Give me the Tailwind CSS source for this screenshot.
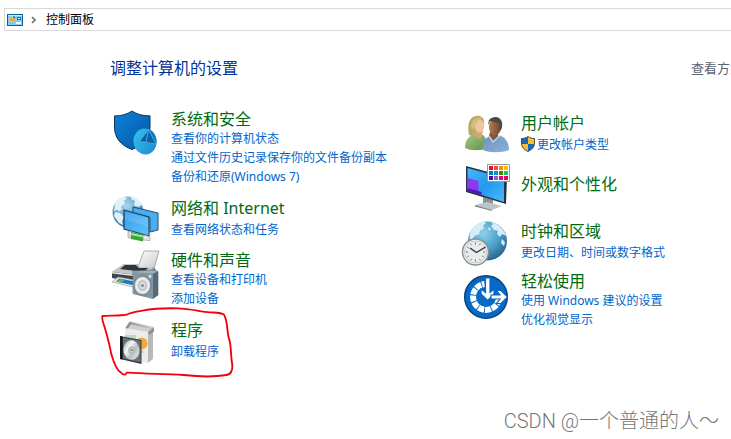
<!DOCTYPE html>
<html lang="zh-CN">
<head>
    <meta charset="UTF-8">
    <meta name="viewport" content="width=device-width, initial-scale=1.0">
    <title>控制面板</title>
    <script src="https://cdn.jsdelivr.net/npm/@tailwindcss/browser@4"></script>
</head>
<body class="relative min-h-screen overflow-hidden bg-white font-['Noto_Sans','Noto_Sans_CJK_SC',sans-serif] text-xs text-black">
    <!-- Address bar -->
    <nav class="mt-2 ml-1 flex h-[23px] items-center border border-r-0 border-[#d9d9d9] pl-0.5" aria-label="地址">
        <svg class="h-3 w-4" viewBox="0 0 16 12">
            <rect x=".5" y=".5" width="15" height="11" fill="#7fd0f7" stroke="#08639c"/>
            <rect x="1" y="1" width="14" height="1" fill="#c2ecff"/>
            <circle cx="5.5" cy="5" r="2.8" fill="#fff"/>
            <path d="M5.5 5V2.2A2.8 2.8 0 1 0 8.3 5z" fill="#f5a623"/>
            <path d="M6 4.500V2a2.800 2.800 0 0 1 2.500 2.500z" fill="#1377bd"/>
            <path d="M10 3h4v3h-4z" fill="#1377bd"/>
            <path d="M11 4h2v1h-2z" fill="#fff"/>
            <path d="M2 9h5v1H2z" fill="#f5a623"/>
            <path d="M9 8h5v2H9z" fill="#fff"/>
        </svg>
        <svg class="mx-2 h-2 w-1.5" viewBox="0 0 6 8" fill="none" stroke="#6e6e6e" stroke-width="1.6"><path d="M1 1l3 3-3 3"/></svg>
        <a href="#" class="pl-px">控制面板</a>
    </nav>

    <main>
        <header class="mt-[25px] flex items-center justify-between pl-[110px]">
            <h1 class="text-base leading-6 text-[#003399]">调整计算机的设置</h1>
            <span class="w-10 shrink-0 overflow-hidden text-[13px] leading-5 whitespace-nowrap text-[#5a6472]">查看方式:</span>
        </header>

        <div class="mt-[29px] grid grid-cols-[350px_1fr] pl-[111px] whitespace-nowrap">
            <!-- Left column -->
            <div class="flex flex-col gap-2">
                <section class="flex items-start gap-3">
                    <svg class="size-12 shrink-0" viewBox="0 0 48 48">
                        <defs>
                            <linearGradient id="shield" x1="0" y1="0" x2="1" y2="1"><stop offset="0" stop-color="#0b82d8"/><stop offset="1" stop-color="#0557a5"/></linearGradient>
                            <linearGradient id="pie" x1="0" y1="0" x2="1" y2="1"><stop offset="0" stop-color="#35c3f0"/><stop offset="1" stop-color="#1789c9"/></linearGradient>
                        </defs>
                        <path d="M21 2c5 3.400 11 4.900 18 4.900V18c0 11-7 18.500-18 22.500C10 36.500 3.500 29 3.500 18V6.900C10.500 6.900 16 5.500 21 2z" fill="url(#shield)" stroke="#13324f"/>
                        <ellipse cx="34" cy="32.500" rx="11.500" ry="13" transform="rotate(-12 34 32.500)" fill="url(#pie)"/>
                        <path d="M34.500 34l3-14c4 1.500 7 5 8 11l-.5 4z" fill="#1477bb"/>
                        <path d="M37.200 21l-2.700 12-6-.4z" fill="#0b5ca8"/>
                        <path d="M37.500 21l7.500 14-10-1.400z" fill="#125fa5"/>
                        <path d="M28.500 32.500L37.500 20.500 45 35l-16.500-2.500M35 33.500l2.500-13" fill="none" stroke="#45b8e8" stroke-width=".8"/>
                    </svg>
                    <div class="self-center">
                        <h2 class="text-base leading-5 text-[#006b12]"><a href="#">系统和安全</a></h2>
                        <ul class="leading-[19px] text-[#0066cc]">
                            <li><a href="#">查看你的计算机状态</a></li>
                            <li><a href="#">通过文件历史记录保存你的文件备份副本</a></li>
                            <li><a href="#">备份和还原(Windows 7)</a></li>
                        </ul>
                    </div>
                </section>

                <section class="flex items-start gap-3">
                    <svg class="size-12 shrink-0" viewBox="0 0 48 48">
                        <defs>
                            <radialGradient id="globe" cx=".45" cy=".3" r=".75"><stop offset="0" stop-color="#a9d8ed"/><stop offset=".6" stop-color="#5c9fc4"/><stop offset="1" stop-color="#356f99"/></radialGradient>
                            <linearGradient id="screen" x1="0" y1="0" x2="1" y2="1"><stop offset="0" stop-color="#2f9cee"/><stop offset="1" stop-color="#63c4fb"/></linearGradient>
                        </defs>
                        <circle cx="17" cy="18" r="15.500" fill="url(#globe)"/>
                        <path d="M4 10c2-4 6-7 10-7.500l2 2-3 2 1 3-4 3 1 3-3 2-2-2-3 2zM20 3c4 0 9 3 11 8l-4 2-4-2 1-4-4-2zM4 18l5 1 4 4-2 4 1 4-4-2-5-7z" fill="#e0f1f8"/>
                        <path d="M22 13l25 6v17l-8 2V24l-17-5z" fill="#48aef4" stroke="#294e6b"/>
                        <path d="M13 16l25 7v19l-25-7z" fill="url(#screen)" stroke="#203e57" stroke-width="1.200"/>
                        <path d="M14 18l23 6.500v8L14 26z" fill="#fff" opacity=".12"/>
                        <path d="M17 37l5 1v7l-5-1.500z" fill="#d9ddd9" stroke="#8b928b" stroke-width=".6"/>
                        <path d="M20 38l12 2.500v7L20 45z" fill="#35aa35"/>
                        <path d="M20 39l12 2.500v2L20 41z" fill="#a5e6a0"/>
                        <path d="M32 41l7 1.500v4L32 46z" fill="#e6e9e6" stroke="#8b928b" stroke-width=".6"/>
                    </svg>
                    <div class="self-center">
                        <h2 class="mb-0.5 text-base leading-5 text-[#006b12]"><a href="#">网络和 Internet</a></h2>
                        <ul class="leading-[19px] text-[#0066cc]">
                            <li><a href="#">查看网络状态和任务</a></li>
                        </ul>
                    </div>
                </section>

                <section class="flex items-start gap-3">
                    <svg class="size-12 shrink-0 overflow-visible" viewBox="0 0 48 48">
                        <defs>
                            <linearGradient id="paper" x1="0" y1="0" x2="1" y2="1"><stop offset="0" stop-color="#fff"/><stop offset="1" stop-color="#c6c9cc"/></linearGradient>
                            <radialGradient id="cone"><stop offset="0" stop-color="#8b9399"/><stop offset=".3" stop-color="#c6cdd2"/><stop offset=".75" stop-color="#eef1f2"/><stop offset="1" stop-color="#a5adb3"/></radialGradient>
                        </defs>
                        <path d="M33 1h15l-5 18H25l3-5z" fill="url(#paper)" stroke="#8a8e91" stroke-width=".7"/>
                        <path d="M13 14h13l3 3h14l2 3v10l-15 2L1 27v-5z" fill="#8b9094"/>
                        <path d="M13 14h13l3 3h14l-8 9L1 22z" fill="#c3c6c9"/>
                        <path d="M14 15h11l3 3h9l-4 4L9 19z" fill="#30363b"/>
                        <path d="M1 22l33 4v8L1 28z" fill="#3d4347"/>
                        <path d="M1 22l33 4v1.500L1 23.500z" fill="#e2e5e7"/>
                        <path d="M7 27l22 4-7 6L1 32z" fill="#e8edef" stroke="#8b9195" stroke-width=".6"/>
                        <path d="M8 28.500l16 3-3 3.500-16-3.500z" fill="#2379bd"/>
                        <path d="M9 29l5 .8-4 3-5-1z" fill="#5abb5d"/>
                        <path d="M22 21l21-1 4 1.500V45l-5 3.500-20-5z" fill="#9fb0bb" stroke="#5c6c77" stroke-width=".7"/>
                        <path d="M22 22l20 1.500v25L22 43.500z" fill="#8496a3"/>
                        <path d="M42 23.500l5-2V45l-5 3.500z" fill="#566976"/>
                        <ellipse cx="31.500" cy="35.500" rx="8.500" ry="9.500" fill="url(#cone)" stroke="#66737c" stroke-width=".8"/>
                        <ellipse cx="31.500" cy="35.500" rx="3.600" ry="4.500" fill="#d8dde0" stroke="#929ba1" stroke-width=".7"/>
                        <circle cx="31.500" cy="35.500" r="1.500" fill="#838c93"/>
                        <circle cx="39" cy="26.500" r="1.400" fill="#e2e7ea"/>
                    </svg>
                    <div class="self-center">
                        <h2 class="text-base leading-5 text-[#006b12]"><a href="#">硬件和声音</a></h2>
                        <ul class="leading-[19px] text-[#0066cc]">
                            <li><a href="#">查看设备和打印机</a></li>
                            <li><a href="#">添加设备</a></li>
                        </ul>
                    </div>
                </section>

                <section class="relative flex items-start gap-3">
                    <svg class="size-12 shrink-0" viewBox="0 0 48 48">
                        <defs>
                            <linearGradient id="disc" x1="0" y1="0" x2="1" y2="1"><stop offset="0" stop-color="#9fa7ab"/><stop offset=".35" stop-color="#f5f7f7"/><stop offset=".6" stop-color="#b9c1c4"/><stop offset="1" stop-color="#eef1f2"/></linearGradient>
                        </defs>
                        <path d="M14 12l23 4v31l-23-4z" fill="#ececec"/>
                        <path d="M37 16l5-2v29l-5 4z" fill="#b9b9b9"/>
                        <path d="M14 19h11v10H14z" fill="#b9dac3"/>
                        <circle cx="30.500" cy="27.500" r="6" fill="#f4a73b"/>
                        <path d="M25 24l9 13h-9z" fill="#d3dbd0"/>
                        <path d="M14 12l5-7 24 6-1.500 2L37 16z" fill="#cfcfcf"/>
                        <path d="M18.500 6l-4 6 2.500.5L20 8l22 5z" fill="#8e8e8e"/>
                        <path d="M37 16l6-5v4.500l-5 3.500z" fill="#919191"/>
                        <path d="M9 20l21.500 4v24L9 43z" fill="#31383c"/>
                        <path d="M9 20l2.500.5v23L9 43z" fill="#15191b"/>
                        <path d="M12 21.500l17.500 3.300v21.500L12 42.500z" fill="#687277"/>
                        <ellipse cx="20.500" cy="34" rx="8" ry="9.800" transform="rotate(-6 20.500 34)" fill="url(#disc)"/>
                        <ellipse cx="20.500" cy="34" rx="2.800" ry="3.300" fill="#cbd1d3" stroke="#828b8f" stroke-width=".6"/>
                        <circle cx="20.500" cy="34" r="1.100" fill="#6f787c"/>
                    </svg>
                    <div class="self-center">
                        <h2 class="mb-0.5 text-base leading-5 text-[#006b12]"><a href="#">程序</a></h2>
                        <ul class="leading-[19px] text-[#0066cc]">
                            <li><a href="#">卸载程序</a></li>
                        </ul>
                    </div>
                    <!-- Red pen mark round the programs entry -->
                    <svg class="pointer-events-none absolute -top-4 -left-4 h-[85px] w-[150px]" viewBox="0 0 450 255" fill="none" stroke="#f5000a" stroke-width="5.500" stroke-linecap="round" stroke-linejoin="round">
                        <path d="M95 218C92 227 84 225 77 217C65 211 57 190 49 163C43 130 36 106 29 82C24 66 20 57 22 48C50 46 78 48 98 43C106 38 120 36 142 32C180 25 210 24 247 25C292 26 315 36 345 37C365 38 379 37 387 44C398 61 395 89 401 113C410 135 406 165 412 195C413 214 406 223 395 225C360 231 310 230 266 225C210 221 160 222 97 218"/>
                    </svg>
                </section>
            </div>

            <!-- Right column -->
            <div class="flex flex-col gap-1.5">
                <section class="flex items-start gap-3">
                    <svg class="size-12 shrink-0" viewBox="0 0 48 48">
                        <defs>
                            <linearGradient id="green" x1="0" y1="0" x2="1" y2="1"><stop offset="0" stop-color="#a7c889"/><stop offset="1" stop-color="#648f48"/></linearGradient>
                            <linearGradient id="blue" x1="0" y1="0" x2="1" y2="1"><stop offset="0" stop-color="#6b91be"/><stop offset="1" stop-color="#8db0d6"/></linearGradient>
                            <linearGradient id="face" x1="0" y1="0" x2="1" y2="0"><stop offset="0" stop-color="#b07c51"/><stop offset="1" stop-color="#70452d"/></linearGradient>
                        </defs>
                        <path d="M8 26C6 16 8 8 15 7c6-1 9 3 8 9l-2 10-5 3z" fill="#b8a965"/>
                        <path d="M4 39c0-7 3-12 10-14l8 1c3 2 4 7 4 13-6 3-16 3-22 0z" fill="url(#green)"/>
                        <path d="M14 21h7v5c-1 5-4 5-7 0z" fill="#d5a377"/>
                        <ellipse cx="18.500" cy="17" rx="4.800" ry="6.500" fill="#efc69e"/>
                        <path d="M10 18c0-7 5-10 12-9-4 2-8 5-9 12z" fill="#d1c17d"/>
                        <path d="M22 41c-1-8 2-13 10-15l8 1c6 3 8 8 8 14-7 3-20 3-26 0z" fill="url(#blue)"/>
                        <path d="M29 23l8 1v4l-5 5-4-6z" fill="#865539"/>
                        <path d="M28 27l4 6 5-5 2-1" fill="none" stroke="#b9d0ea" stroke-width="1.500"/>
                        <ellipse cx="34" cy="18" rx="6" ry="8.500" fill="url(#face)"/>
                        <path d="M27.500 16c-1-6 3-8 8-8 5 1 7 6 5 12l-2 2 .5-8c-5 0-7-2-10-2z" fill="#4b4945"/>
                    </svg>
                    <div class="self-center">
                        <h2 class="mb-0.5 text-base leading-5 text-[#006b12]"><a href="#">用户帐户</a></h2>
                        <ul class="leading-[19px] text-[#0066cc]">
                            <li>
                                <a href="#" class="flex items-center gap-0.5">
                                    <svg class="h-4 w-3.5" viewBox="0 0 14 16">
                                        <path d="M7 .5c2 1.500 4 2 6.500 2V7c0 4-2.500 6.500-6.500 8.500C3 13.500.5 11 .5 7V2.500c2.500 0 4.500-.5 6.500-2z" fill="#1768b5"/>
                                        <path d="M7 .5c2 1.500 4 2 6.500 2V8H7zM.5 8H7v7.500C3 13.500.8 11.500.5 8z" fill="#fcbf2c"/>
                                        <path d="M7 .5c2 1.500 4 2 6.500 2V7c0 4-2.500 6.500-6.500 8.500C3 13.500.5 11 .5 7V2.500c2.500 0 4.500-.5 6.500-2z" fill="none" stroke="#444c55"/>
                                    </svg>
                                    更改帐户类型
                                </a>
                            </li>
                        </ul>
                    </div>
                </section>

                <section class="flex items-start gap-3">
                    <svg class="size-12 shrink-0 overflow-visible" viewBox="0 2 48 48">
                        <defs>
                            <linearGradient id="desk" x1="0" y1="0" x2="1" y2="1"><stop offset="0" stop-color="#48b9fb"/><stop offset=".5" stop-color="#2698ed"/><stop offset="1" stop-color="#49b9ff"/></linearGradient>
                        </defs>
                        <path d="M22 36l10 3v6H22z" fill="#8b9298"/>
                        <path d="M14 44l12-3 15 4-10 4z" fill="#bdc5ca"/>
                        <path d="M14 44l17 5v1L14 45.500z" fill="#768087"/>
                        <path d="M5 5l41 11-1 27L5 31z" fill="#27333f"/>
                        <path d="M6.500 7L43 17v24L6.500 29.500z" fill="url(#desk)"/>
                        <path d="M6.500 17l11 3v12.500l-11-3.500z" fill="#8f36ef"/>
                        <path d="M6.500 27l14 4v3l-14-4.500z" fill="#5315b4"/>
                        <path d="M26.500 3.500h22v17h-22z" fill="#fff" stroke="#999"/>
                        <path fill="#e81123" d="M28 5h4v4h-4z"/><path fill="#ff4343" d="M33 5h4v4h-4z"/><path fill="#ff8c00" d="M38 5h4v4h-4z"/><path fill="#ffb900" d="M43 5h4v4h-4z"/>
                        <path fill="#0078d7" d="M28 10h4v4h-4z"/><path fill="#0099bc" d="M33 10h4v4h-4z"/><path fill="#498205" d="M38 10h4v4h-4z"/><path fill="#00cc6a" d="M43 10h4v4h-4z"/>
                        <path fill="#4f00bc" d="M28 15h4v4h-4z"/><path fill="#8764b8" d="M33 15h4v4h-4z"/><path fill="#e3008c" d="M38 15h4v4h-4z"/><path fill="#ea005e" d="M43 15h4v4h-4z"/>
                    </svg>
                    <div class="self-center pb-1.5">
                        <h2 class="text-base leading-5 text-[#006b12]"><a href="#">外观和个性化</a></h2>
                    </div>
                </section>

                <section class="flex items-start gap-3">
                    <svg class="size-12 shrink-0 overflow-visible" viewBox="0 2 48 48">
                        <defs>
                            <radialGradient id="earth" cx=".4" cy=".3" r=".75"><stop offset="0" stop-color="#8fd0ed"/><stop offset=".55" stop-color="#4a9fc8"/><stop offset="1" stop-color="#265f88"/></radialGradient>
                        </defs>
                        <circle cx="26.500" cy="26" r="19.500" fill="url(#earth)"/>
                        <path d="M11 14c3-4 7-7 12-7.500l2 2-3 2 1 3-4 2-1 4-4 1-2 3-3 1c-1-4 0-7 2-10.500zM30 7c7 1 13 7 15 14l-4-2-2 3-3-3 1-3-4-1-3-4 2-2zM27 12l3 2-2 2zM41 24l3 3-1 4-3-3z" fill="#d5edf6"/>
                        <circle cx="14.500" cy="37" r="13" fill="#f4f5f5" stroke="#8b9295" stroke-width="1.500"/>
                        <circle cx="14.500" cy="37" r="11" fill="#e9ebed" stroke="#c4c9cc"/>
                        <path d="M14.500 27.500v2M14.500 44.500v2M5 37h2M22 37h2M9.700 28.800l.8 1.400M18.500 43.800l.8 1.400M6.300 32.200l1.400.8M21.300 41l1.400.8M19.300 28.800l-.8 1.400M10.500 43.800l-.8 1.400M7.700 41l-1.400.8" stroke="#6d7377"/>
                        <path d="M9 33l6.500 4.500 9-5.500" fill="none" stroke="#2c3338" stroke-width="1.400"/>
                    </svg>
                    <div class="self-center">
                        <h2 class="mb-0.5 text-base leading-5 text-[#006b12]"><a href="#">时钟和区域</a></h2>
                        <ul class="leading-[19px] text-[#0066cc]">
                            <li><a href="#">更改日期、时间或数字格式</a></li>
                        </ul>
                    </div>
                </section>

                <section class="flex items-start gap-3">
                    <svg class="size-12 shrink-0 overflow-visible" viewBox="0 0 48 48">
                        <circle cx="25" cy="26" r="21.300" fill="#0669c6" stroke="#0b4280" stroke-width="1.500"/>
                        <path d="M38 27.500A13 13 0 1 1 23.500 13" fill="none" stroke="#fff" stroke-width="6" stroke-dasharray="6 .9"/>
                        <path d="M24.500 7h4.500v14.500l4-3.500v5l-6.300 6.500L20 23v-5l4.500 3.500z" fill="#fff" stroke="#0669c6" stroke-width="1.200"/>
                        <path d="M30 24h9l-3.500-4.500h4.500L46.500 26 40 32.500h-4.500L39 28H30z" fill="#fff" stroke="#0669c6" stroke-width="1.200"/>
                    </svg>
                    <div class="self-center">
                        <h2 class="text-base leading-5 text-[#006b12]"><a href="#">轻松使用</a></h2>
                        <ul class="leading-[19px] text-[#0066cc]">
                            <li><a href="#">使用 Windows 建议的设置</a></li>
                            <li><a href="#">优化视觉显示</a></li>
                        </ul>
                    </div>
                </section>
            </div>
        </div>
    </main>

    <!-- Watermark -->
    <p class="absolute right-3 bottom-1 font-['Roboto','Noto_Sans_CJK_SC',sans-serif] text-xl font-light whitespace-nowrap text-[#777]">CSDN @一个普通的人～</p>
</body>
</html>
